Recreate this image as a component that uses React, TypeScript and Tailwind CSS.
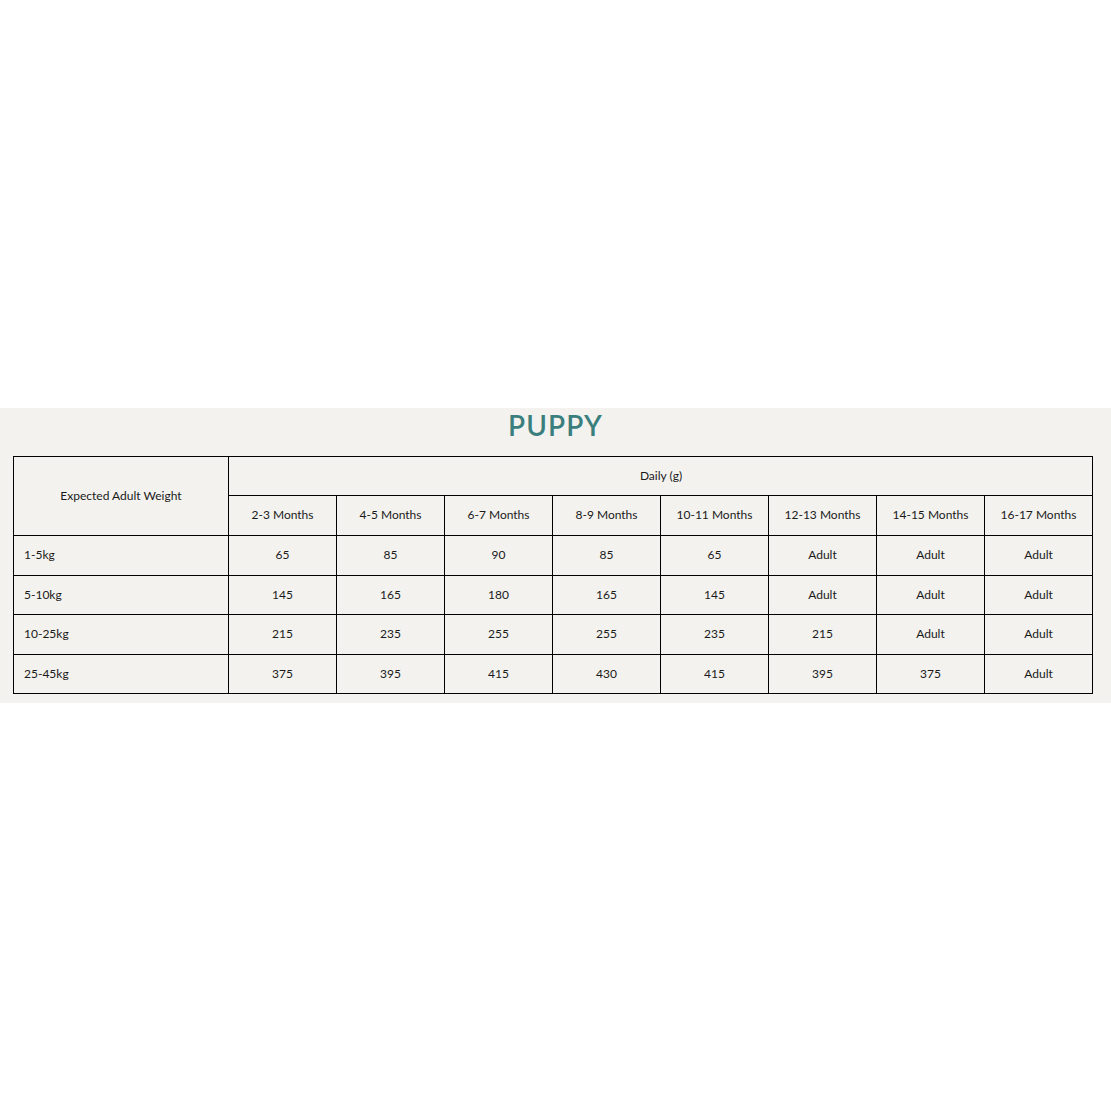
const months = ['2-3 Months', '4-5 Months', '6-7 Months', '8-9 Months', '10-11 Months', '12-13 Months', '14-15 Months', '16-17 Months'];

const rows: { weight: string; values: string[] }[] = [
  { weight: '1-5kg', values: ['65', '85', '90', '85', '65', 'Adult', 'Adult', 'Adult'] },
  { weight: '5-10kg', values: ['145', '165', '180', '165', '145', 'Adult', 'Adult', 'Adult'] },
  { weight: '10-25kg', values: ['215', '235', '255', '255', '235', '215', 'Adult', 'Adult'] },
  { weight: '25-45kg', values: ['375', '395', '415', '430', '415', '395', '375', 'Adult'] },
];

export default function App() {
  return (
    <div className="w-[1111px] h-[1111px] bg-white flex flex-col font-['Lato',sans-serif] text-[#1a1a1a]">
      <div className="h-[408px]" />
      <section className="bg-[#f3f2ee] pb-[9px]">
        {/* Title */}
        <h2 className="h-[48px] pt-[1px] text-center text-[28px] leading-[32px] font-semibold tracking-[0.04em] text-[#3b7e7e]">
          PUPPY
        </h2>

        <div className="px-[13px]">
          <table className="table-fixed border-collapse w-[1080px] text-[12px]">
            <colgroup>
              <col className="w-[215px]" />
              {months.map((m) => (
                <col key={m} className="w-[108px]" />
              ))}
            </colgroup>
            <thead>
              <tr className="h-[39px]">
                <th rowSpan={2} className="border border-black font-normal text-center">
                  Expected Adult Weight
                </th>
                <th colSpan={8} className="border border-black font-normal text-center pl-[1px]">
                  Daily (g)
                </th>
              </tr>
              <tr className="h-[40px]">
                {months.map((m) => (
                  <th key={m} className="border border-black font-normal text-center pb-[1px]">
                    {m}
                  </th>
                ))}
              </tr>
            </thead>
            <tbody>
              {rows.map((r, i) => (
                <tr key={r.weight} className={i % 2 === 0 ? 'h-[40px]' : 'h-[39px]'}>
                  <td className="border border-black pl-[10px] pb-[1px]">{r.weight}</td>
                  {r.values.map((v, j) => (
                    <td key={j} className="border border-black text-center pb-[1px]">
                      {v}
                    </td>
                  ))}
                </tr>
              ))}
            </tbody>
          </table>
        </div>
      </section>
    </div>
  );
}
